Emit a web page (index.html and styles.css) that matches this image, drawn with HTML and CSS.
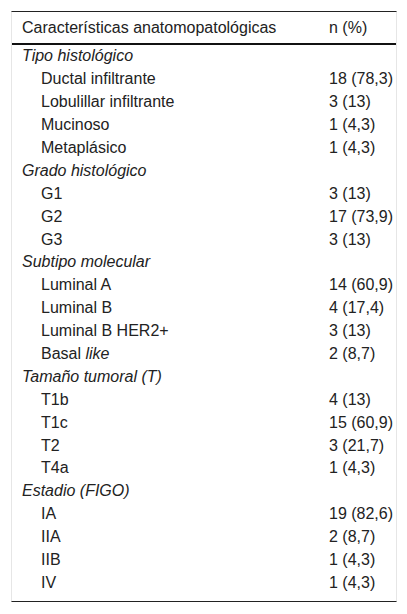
FILE: index.html
```html
<!DOCTYPE html>
<html lang="es">
<head>
<meta charset="utf-8">
<link rel="stylesheet" href="styles.css">
</head>
<body>
<div class="wrap">
<table class="tbl">
<thead>
<tr><th class="c1">Características anatomopatológicas</th><th>n (%)</th></tr>
</thead>
<tbody>
<tr class="grp"><td class="c1">Tipo histológico</td><td></td></tr>
<tr class="ind"><td class="c1">Ductal infiltrante</td><td>18 (78,3)</td></tr>
<tr class="ind"><td class="c1">Lobulillar infiltrante</td><td>3 (13)</td></tr>
<tr class="ind"><td class="c1">Mucinoso</td><td>1 (4,3)</td></tr>
<tr class="ind"><td class="c1">Metaplásico</td><td>1 (4,3)</td></tr>
<tr class="grp"><td class="c1">Grado histológico</td><td></td></tr>
<tr class="ind"><td class="c1">G1</td><td>3 (13)</td></tr>
<tr class="ind"><td class="c1">G2</td><td>17 (73,9)</td></tr>
<tr class="ind"><td class="c1">G3</td><td>3 (13)</td></tr>
<tr class="grp"><td class="c1">Subtipo molecular</td><td></td></tr>
<tr class="ind"><td class="c1">Luminal A</td><td>14 (60,9)</td></tr>
<tr class="ind"><td class="c1">Luminal B</td><td>4 (17,4)</td></tr>
<tr class="ind"><td class="c1">Luminal B HER2+</td><td>3 (13)</td></tr>
<tr class="ind"><td class="c1">Basal <em>like</em></td><td>2 (8,7)</td></tr>
<tr class="grp"><td class="c1">Tamaño tumoral (T)</td><td></td></tr>
<tr class="ind"><td class="c1">T1b</td><td>4 (13)</td></tr>
<tr class="ind"><td class="c1">T1c</td><td>15 (60,9)</td></tr>
<tr class="ind"><td class="c1">T2</td><td>3 (21,7)</td></tr>
<tr class="ind"><td class="c1">T4a</td><td>1 (4,3)</td></tr>
<tr class="grp"><td class="c1">Estadio (FIGO)</td><td></td></tr>
<tr class="ind"><td class="c1">IA</td><td>19 (82,6)</td></tr>
<tr class="ind"><td class="c1">IIA</td><td>2 (8,7)</td></tr>
<tr class="ind"><td class="c1">IIB</td><td>1 (4,3)</td></tr>
<tr class="ind"><td class="c1">IV</td><td>1 (4,3)</td></tr>
</tbody>
</table>
</div>
</body>
</html>
```
FILE: styles.css
```css
html, body {
  margin: 0;
  padding: 0;
  background: #fff;
}
body {
  font-family: "Liberation Sans", Arial, sans-serif;
  font-size: 16px;
  color: #222;
}
.wrap {
  margin: 11px 0 0 11px;
  width: 384px;
  border-top: 1px solid #222;
  border-bottom: 1px solid #222;
  border-left: 1px solid #e6e6e6;
  border-right: 1px solid #e6e6e6;
  padding-bottom: 7px;
}
.tbl {
  border-collapse: collapse;
  width: 100%;
}
.tbl th {
  text-align: left;
  font-weight: normal;
  height: 31px;
  padding: 0 0 0 10px;
  border-bottom: 2px solid #111;
  vertical-align: middle;
}
.tbl td {
  height: 22.9px;
  padding: 0 0 0 10px;
  line-height: 18px;
  vertical-align: middle;
}
.c1 {
  width: 278px;
}
.grp td {
  font-style: italic;
}
.ind td.c1 {
  padding-left: 29px;
}
em {
  font-style: italic;
}
```
